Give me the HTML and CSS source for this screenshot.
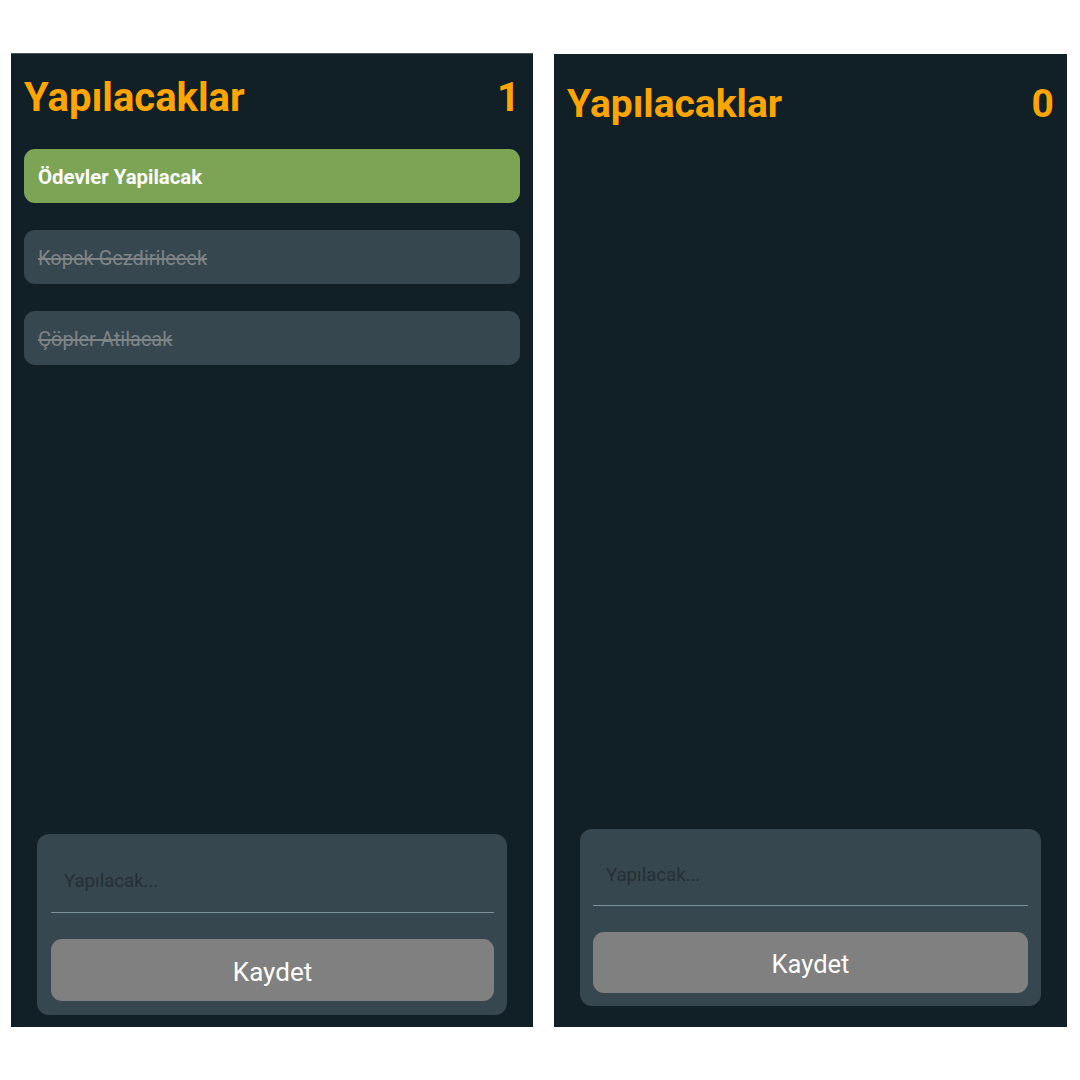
FILE: index.html
```html
<!DOCTYPE html>
<html lang="tr">
<head>
<meta charset="utf-8">
<title>Yapılacaklar</title>
<link rel="stylesheet" href="styles.css">
</head>
<body>
<div class="screens">
  <section class="phone phone--list">
    <header class="phone-header">
      <h1 class="title">Yapılacaklar</h1>
      <span class="count">1</span>
    </header>
    <ul class="todo-list">
      <li class="todo todo--active">Ödevler Yapilacak</li>
      <li class="todo todo--done">Kopek Gezdirilecek</li>
      <li class="todo todo--done">Çöpler Atilacak</li>
    </ul>
    <div class="spacer"></div>
    <form class="composer">
      <div class="field"><span class="placeholder">Yapılacak...</span></div>
      <button type="button" class="save">Kaydet</button>
    </form>
  </section>

  <section class="phone phone--empty">
    <header class="phone-header">
      <h1 class="title">Yapılacaklar</h1>
      <span class="count">0</span>
    </header>
    <div class="spacer"></div>
    <form class="composer">
      <div class="field"><span class="placeholder">Yapılacak...</span></div>
      <button type="button" class="save">Kaydet</button>
    </form>
  </section>
</div>
</body>
</html>
```

FILE: styles.css
```css
* { box-sizing: border-box; }

html, body {
  margin: 0;
  padding: 0;
  background: #ffffff;
  font-family: Roboto, "Noto Sans", "Liberation Sans", sans-serif;
}

.screens {
  display: flex;
  align-items: flex-start;
  gap: 21px;
  padding: 53px 0 0 11px;
}

.phone {
  display: flex;
  flex-direction: column;
  background: #111f27;
  padding: 0 13px;
}

.phone--list {
  width: 522px;
  height: 974px;
  border-top: 1px solid #4d565c;
  padding-bottom: 12px;
}

.phone--empty {
  width: 513px;
  height: 973px;
  margin-top: 1px;
  padding-bottom: 21px;
}

.phone-header {
  display: flex;
  justify-content: space-between;
  align-items: baseline;
  color: #ffa500;
  font-weight: 700;
}

.phone--list .phone-header {
  padding-top: 20px;
  font-size: 40px;
  line-height: 48px;
}

.phone--empty .phone-header {
  padding-top: 26px;
  font-size: 39px;
  line-height: 48px;
}

.title {
  margin: 0;
  font-size: inherit;
  font-weight: 700;
}

.todo-list {
  list-style: none;
  margin: 27px 0 0;
  padding: 0;
  display: flex;
  flex-direction: column;
  gap: 27px;
}

.todo {
  height: 54px;
  border-radius: 11px;
  padding: 2px 14px 0;
  display: flex;
  align-items: center;
  font-size: 20px;
}

.todo--active {
  background: #7ca454;
  color: #ffffff;
  font-weight: 700;
  font-size: 20.4px;
}

.todo--done {
  background: #37474f;
  color: #7f8487;
  text-decoration: line-through;
}

.spacer { flex: 1; }

.composer {
  margin: 0 13px;
  background: #37474f;
  border-radius: 12px;
  padding: 14px 13px 14px 14px;
  display: flex;
  flex-direction: column;
}

.field {
  height: 65px;
  border-bottom: 1px solid #7c939e;
  display: flex;
  align-items: center;
  padding: 2px 13px 0;
}

.placeholder {
  font-size: 18.6px;
  color: #252f35;
}

.save {
  margin-top: 26px;
  height: 62px;
  border: 0;
  border-radius: 11px;
  background: #808080;
  color: #ffffff;
  font-family: inherit;
  font-size: 26px;
  padding: 3px 0 0;
}

.phone--empty .composer {
  padding: 13px;
}

.phone--empty .field { height: 64px; }

.phone--empty .save {
  height: 61px;
  margin-top: 26px;
  font-size: 25.5px;
  padding-top: 2px;
}
```
